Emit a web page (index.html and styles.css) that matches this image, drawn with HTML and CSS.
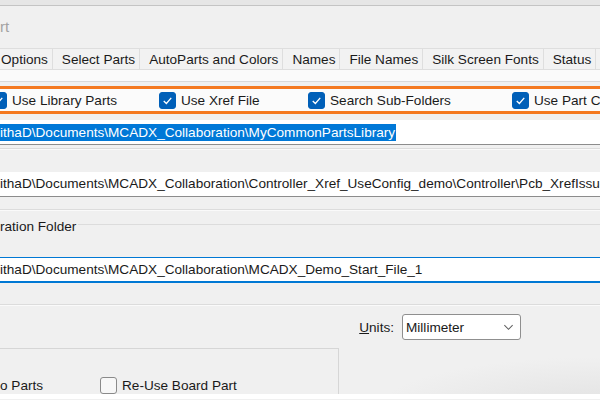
FILE: index.html
```html
<!DOCTYPE html>
<html lang="en">
<head>
    <meta charset="UTF-8">
    <title>Import</title>
    <link rel="stylesheet" href="styles.css">
</head>

<body>
    <div class="chrome"></div>
    <div class="title">rt</div>

    <div class="tabs">
        <span class="tab first">Options</span>
        <span class="tab">Select Parts</span>
        <span class="tab">AutoParts and Colors</span>
        <span class="tab">Names</span>
        <span class="tab">File Names</span>
        <span class="tab">Silk Screen Fonts</span>
        <span class="tab">Status</span>
        <span class="tab"></span>
    </div>
    <div class="subbar"></div>

    <div class="opts">
        <label class="chk"><span class="box on"><svg viewBox="0 0 16 16"><polyline points="4,8.5 6.8,11.2 12,5.2"/></svg></span>Use Library Parts</label>
        <label class="chk"><span class="box on"><svg viewBox="0 0 16 16"><polyline points="4,8.5 6.8,11.2 12,5.2"/></svg></span>Use Xref File</label>
        <label class="chk"><span class="box on"><svg viewBox="0 0 16 16"><polyline points="4,8.5 6.8,11.2 12,5.2"/></svg></span>Search Sub-Folders</label>
        <label class="chk"><span class="box on"><svg viewBox="0 0 16 16"><polyline points="4,8.5 6.8,11.2 12,5.2"/></svg></span>Use Part Config</label>
    </div>

    <div class="field lib"><span class="sel">ithaD\Documents\MCADX_Collaboration\MyCommonPartsLibrary</span></div>
    <div class="rule"></div>

    <div class="field xref">ithaD\Documents\MCADX_Collaboration\Controller_Xref_UseConfig_demo\Controller\Pcb_XrefIssue</div>
    <div class="rule r2"></div>

    <div class="group-head">
        <span>ration Folder</span>
        <div class="group-line"></div>
    </div>
    <div class="field focus">ithaD\Documents\MCADX_Collaboration\MCADX_Demo_Start_File_1</div>
    <div class="rule r3"></div>

    <div class="units">
        <span class="units-label"><u>U</u>nits:</span>
        <div class="select">
            <span>Millimeter</span>
            <svg viewBox="0 0 12 8"><polyline points="1.5,2 6,6.5 10.5,2"/></svg>
        </div>
    </div>

    <div class="bottom">
        <div class="groupbox">
            <div class="chk-row">
                <span class="plain">o Parts</span>
                <label class="chk"><span class="box"></span>Re-Use Board Part</label>
            </div>
        </div>
        <div class="shade"></div>
    </div>
    <div class="edge"></div>
</body>

</html>
```

FILE: styles.css
```css
body {
    margin: 0;
    width: 600px;
    height: 400px;
    overflow: hidden;
    background-color: #f0f0f0;
    font-family: "Liberation Sans", Arial, sans-serif;
    font-size: 13.6px;
    color: #1a1a1a;
}

.chrome {
    height: 5px;
    background-color: #e6e6e6;
    border-bottom: 1px solid #c4c4c4;
}

.title {
    padding-top: 12px;
    height: 18px;
    line-height: 18px;
    margin-bottom: 12px;
    font-size: 15px;
    color: #a3a3a3;
}

.tabs {
    display: flex;
    height: 22px;
    white-space: nowrap;
}

.tab {
    height: 20px;
    line-height: 22px;
    padding: 0 4px 0 9px;
    border: 1px solid #dedede;
    border-left: none;
    background-color: #f2f2f2;
}

.tab.first {
    padding-left: 1px;
}

.subbar {
    height: 12px;
    background-color: #fafafa;
    border-top: 1px solid #e3e3e3;
    border-bottom: 1px solid #d9d9d9;
    margin-top: -2px;
}

.opts {
    display: grid;
    grid-template-columns: 169px 149px 204px auto;
    margin-top: 4px;
    margin-left: -10px;
    height: 22px;
    border-top: 3px solid #f47920;
    border-bottom: 3px solid #f47920;
    background-color: #fbfbfb;
    white-space: nowrap;
}

.chk {
    display: flex;
    align-items: center;
}

.box {
    width: 15px;
    height: 15px;
    margin-right: 5px;
    border: 1px solid #8a8a8a;
    border-radius: 3px;
    background-color: #f7f7f7;
    flex: none;
}

.box.on {
    background-color: #005fb8;
    border-color: #005fb8;
}

.box svg {
    display: block;
    width: 15px;
    height: 15px;
    fill: none;
    stroke: #fff;
    stroke-width: 1.4;
}

.field {
    height: 24px;
    line-height: 24px;
    background-color: #fff;
    border-bottom: 1px solid #8c8c8c;
    white-space: nowrap;
    overflow: hidden;
}

.field.lib {
    margin-top: 6px;
    display: flex;
    align-items: center;
}

.sel {
    line-height: 17px;
    padding-right: 1px;
    background-color: #0078d7;
    color: #fff;
}

.rule {
    margin-top: 3px;
    border-top: 1px solid #dcdcdc;
    border-bottom: 1px solid #fafafa;
}

.field.xref {
    margin-top: 22px;
}

.rule.r2 {
    margin-top: 12px;
}

.group-head {
    display: flex;
    margin-top: 8px;
    line-height: 16px;
    height: 16px;
}

.group-line {
    flex: 1;
    margin-top: 5px;
    margin-left: 2px;
    border-top: 1px solid #dcdcdc;
}

.field.focus {
    margin-top: 22px;
    height: 23px;
    line-height: 23px;
    border-top: 1px solid #0078d4;
    border-bottom: 2px solid #0078d4;
}

.rule.r3 {
    margin-top: 21px;
}

.units {
    display: flex;
    justify-content: flex-end;
    align-items: center;
    margin-top: 8px;
    padding-right: 79px;
    height: 26px;
}

.units-label {
    margin-right: 8px;
}

.select {
    display: flex;
    align-items: center;
    justify-content: space-between;
    width: 108px;
    height: 24px;
    padding: 0 6px 0 3px;
    border: 1px solid #8f8f8f;
    border-radius: 3px;
    background-color: #fff;
}

.select svg {
    width: 11px;
    height: 8px;
    fill: none;
    stroke: #5c5c5c;
    stroke-width: 1.1;
}

.bottom {
    display: flex;
    margin-top: 8px;
    height: 46px;
}

.groupbox {
    width: 338px;
    border-top: 1px solid #d6d6d6;
    border-right: 1px solid #d6d6d6;
}

.chk-row {
    display: flex;
    align-items: center;
    margin-top: 28px;
    height: 17px;
}

.plain {
    width: 100px;
}

.shade {
    flex: 1;
    background: radial-gradient(ellipse at 100% 130%, #e2e2e2 0%, #f0f0f0 60%);
}

.edge {
    height: 5px;
    background-color: #fff;
}
```
